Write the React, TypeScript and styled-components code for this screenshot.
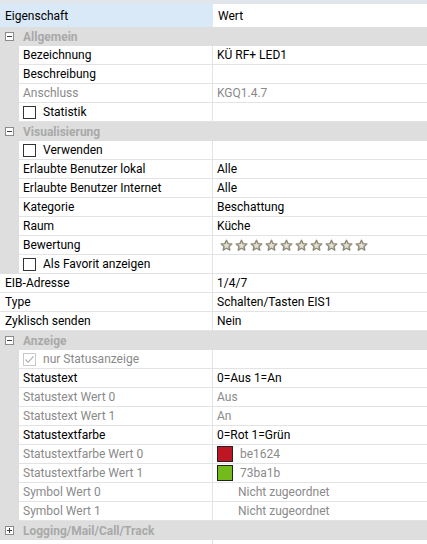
import React, { ReactElement, ReactNode } from 'react';
import styled, { createGlobalStyle, css } from 'styled-components';

type Item =
  | { kind: 'group'; title: string; open: boolean }
  | {
      kind: 'row';
      name: string;
      value?: string;
      nested?: boolean;
      disabled?: boolean;
      check?: 'off' | 'on';
      swatch?: string;
      stars?: number;
      padValue?: boolean;
    };

const items: Item[] = [
  { kind: 'group', title: 'Allgemein', open: true },
  { kind: 'row', name: 'Bezeichnung', value: 'KÜ RF+ LED1', nested: true },
  { kind: 'row', name: 'Beschreibung', nested: true },
  { kind: 'row', name: 'Anschluss', value: 'KGQ1.4.7', nested: true, disabled: true },
  { kind: 'row', name: 'Statistik', nested: true, check: 'off' },
  { kind: 'group', title: 'Visualisierung', open: true },
  { kind: 'row', name: 'Verwenden', nested: true, check: 'off' },
  { kind: 'row', name: 'Erlaubte Benutzer lokal', value: 'Alle', nested: true },
  { kind: 'row', name: 'Erlaubte Benutzer Internet', value: 'Alle', nested: true },
  { kind: 'row', name: 'Kategorie', value: 'Beschattung', nested: true },
  { kind: 'row', name: 'Raum', value: 'Küche', nested: true },
  { kind: 'row', name: 'Bewertung', nested: true, stars: 10 },
  { kind: 'row', name: 'Als Favorit anzeigen', nested: true, check: 'off' },
  { kind: 'row', name: 'EIB-Adresse', value: '1/4/7' },
  { kind: 'row', name: 'Type', value: 'Schalten/Tasten EIS1' },
  { kind: 'row', name: 'Zyklisch senden', value: 'Nein' },
  { kind: 'group', title: 'Anzeige', open: true },
  { kind: 'row', name: 'nur Statusanzeige', nested: true, check: 'on', disabled: true },
  { kind: 'row', name: 'Statustext', value: '0=Aus 1=An', nested: true },
  { kind: 'row', name: 'Statustext Wert 0', value: 'Aus', nested: true, disabled: true },
  { kind: 'row', name: 'Statustext Wert 1', value: 'An', nested: true, disabled: true },
  { kind: 'row', name: 'Statustextfarbe', value: '0=Rot 1=Grün', nested: true },
  { kind: 'row', name: 'Statustextfarbe Wert 0', value: 'be1624', nested: true, disabled: true, swatch: '#be1624' },
  { kind: 'row', name: 'Statustextfarbe Wert 1', value: '73ba1b', nested: true, disabled: true, swatch: '#73ba1b' },
  { kind: 'row', name: 'Symbol Wert 0', value: 'Nicht zugeordnet', nested: true, disabled: true, padValue: true },
  { kind: 'row', name: 'Symbol Wert 1', value: 'Nicht zugeordnet', nested: true, disabled: true, padValue: true },
  { kind: 'group', title: 'Logging/Mail/Call/Track', open: false },
];

function ToggleIcon({ open }: { open: boolean }): ReactElement {
  return (
    <svg width="9" height="9" viewBox="0 0 9 9">
      <rect x="0.5" y="0.5" width="8" height="8" fill="#fff" stroke="#8c8c8c" />
      <line x1="2" y1="4.5" x2="7" y2="4.5" stroke="#404040" />
      {!open && <line x1="4.5" y1="2" x2="4.5" y2="7" stroke="#404040" />}
    </svg>
  );
}

function Star(): ReactElement {
  return (
    <svg width="13" height="13" viewBox="0 0 24 24">
      <path
        d="M12 2.2l2.9 6.3 6.9.7-5.2 4.6 1.5 6.8L12 17.1l-6.1 3.5 1.5-6.8-5.2-4.6 6.9-.7z"
        fill="#e2ded0"
        stroke="#8e8a79"
        strokeWidth="2.6"
        strokeLinejoin="round"
      />
    </svg>
  );
}

function CheckBox({ checked, disabled }: { checked: boolean; disabled?: boolean }): ReactElement {
  return (
    <Box disabled={disabled}>
      {checked && (
        <svg width="11" height="11" viewBox="0 0 11 11">
          <path d="M1.5 5.5l2.7 2.8 5.3-6" fill="none" stroke="#a8a8a8" strokeWidth="1.1" />
        </svg>
      )}
    </Box>
  );
}

function renderValue(item: Extract<Item, { kind: 'row' }>): ReactNode {
  if (item.stars) {
    return (
      <Stars>
        {Array.from({ length: item.stars }, (_, i) => (
          <Star key={i} />
        ))}
      </Stars>
    );
  }
  return (
    <>
      {item.swatch && <Swatch color={item.swatch} />}
      {item.value}
    </>
  );
}

export default function App(): ReactElement {
  return (
    <>
      <GlobalStyle />
      <Grid>
        <TopStrip />
        <HeaderRow>
          <HeaderName>Eigenschaft</HeaderName>
          <HeaderValue>Wert</HeaderValue>
        </HeaderRow>
        {items.map((item, i) =>
          item.kind === 'group' ? (
            <GroupRow key={i}>
              <ToggleCell>
                <ToggleIcon open={item.open} />
              </ToggleCell>
              <GroupTitle>{item.title}</GroupTitle>
            </GroupRow>
          ) : (
            <Row key={i}>
              {item.nested && <Indent />}
              <NameCell nested={item.nested} disabled={item.disabled}>
                {item.check && (
                  <CheckBox checked={item.check === 'on'} disabled={item.disabled} />
                )}
                {item.name}
              </NameCell>
              <ValueCell disabled={item.disabled} padValue={item.padValue}>
                {renderValue(item)}
              </ValueCell>
            </Row>
          ),
        )}
        <Filler>
          <FillerName />
        </Filler>
      </Grid>
    </>
  );
}

const GlobalStyle = createGlobalStyle`
  html, body {
    margin: 0;
    padding: 0;
    background: #fff;
  }
  body {
    font-family: "Segoe UI", Roboto, "Open Sans", sans-serif;
    font-size: 12px;
    color: #000;
  }
`;

const NAME_WIDTH = 213;
const ROW_HEIGHT = 19;

const Grid = styled.div`
  width: 427px;
  height: 544px;
  overflow: hidden;
  display: flex;
  flex-direction: column;
`;

const TopStrip = styled.div`
  height: 4px;
  background: #e1e6ec;
  flex: none;
`;

const HeaderRow = styled.div`
  display: flex;
  height: 23px;
  flex: none;
  align-items: stretch;
`;

const HeaderName = styled.div`
  width: ${NAME_WIDTH}px;
  background: #d9e9f8;
  padding-left: 5px;
  display: flex;
  align-items: center;
  box-sizing: border-box;
`;

const HeaderValue = styled.div`
  flex: 1;
  padding-left: 5px;
  display: flex;
  align-items: center;
  background: #fff;
`;

const GroupRow = styled.div`
  display: flex;
  align-items: center;
  height: ${ROW_HEIGHT}px;
  flex: none;
  background: #dedede;
`;

const ToggleCell = styled.div`
  width: 19px;
  display: flex;
  justify-content: center;
  align-items: center;
  svg {
    display: block;
    margin-left: -1px;
  }
`;

const GroupTitle = styled.div`
  padding-left: 4px;
  font-weight: 700;
  color: #a9a9a9;
`;

const Row = styled.div`
  display: flex;
  height: ${ROW_HEIGHT}px;
  flex: none;
`;

const Indent = styled.div`
  width: 19px;
  flex: none;
  background: #dedede;
`;

const disabledText = css`
  color: #8a8a8a;
`;

const NameCell = styled.div<{ nested?: boolean; disabled?: boolean }>`
  width: ${(p) => (p.nested ? NAME_WIDTH - 19 : NAME_WIDTH)}px;
  flex: none;
  box-sizing: border-box;
  padding-left: ${(p) => (p.nested ? 4 : 5)}px;
  display: flex;
  align-items: center;
  gap: 7px;
  border-bottom: 1px solid #e3e3e3;
  border-right: 1px solid #e3e3e3;
  white-space: nowrap;
  ${(p) => p.disabled && disabledText}
`;

const ValueCell = styled.div<{ disabled?: boolean; padValue?: boolean }>`
  flex: 1;
  display: flex;
  align-items: center;
  padding-left: ${(p) => (p.padValue ? 25 : 4)}px;
  border-bottom: 1px solid #e3e3e3;
  white-space: nowrap;
  ${(p) => p.disabled && disabledText}
`;

const Box = styled.span<{ disabled?: boolean }>`
  width: 13px;
  height: 13px;
  box-sizing: border-box;
  border: 1px solid ${(p) => (p.disabled ? '#c8c8c8' : '#333')};
  background: #fff;
  display: inline-flex;
  align-items: center;
  justify-content: center;
  flex: none;
  svg {
    display: block;
  }
`;

const Stars = styled.div`
  display: flex;
  gap: 2px;
  padding-left: 3px;
  svg {
    display: block;
  }
`;

const Swatch = styled.span<{ color: string }>`
  width: 14px;
  height: 14px;
  border: 1px solid #222;
  background: ${(p) => p.color};
  margin-right: 7px;
  flex: none;
`;

const Filler = styled.div`
  flex: 1;
  display: flex;
`;

const FillerName = styled.div`
  width: ${NAME_WIDTH}px;
  border-right: 1px solid #e3e3e3;
  box-sizing: border-box;
`;
